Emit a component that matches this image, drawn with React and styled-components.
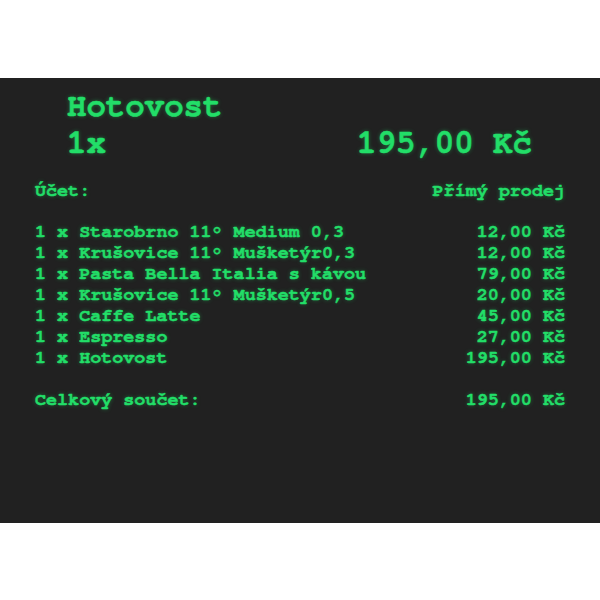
import styled, { createGlobalStyle } from "styled-components";

const mono = `"Nimbus Mono PS", "Nimbus Mono L", "FreeMono", "Courier New", "Liberation Mono", monospace`;

const GlobalStyle = createGlobalStyle`
  html, body {
    margin: 0;
    padding: 0;
    background: #ffffff;
  }
  body {
    font-family: ${mono};
  }
`;

const Page = styled.div`
  width: 600px;
  height: 600px;
  display: flex;
  align-items: center;
`;

const Display = styled.div`
  width: 100%;
  height: 445px;
  box-sizing: border-box;
  background: #212121;
  padding: 10px 35px 0;
  color: #22de68;
  font-family: ${mono};
  font-weight: bold;
  -webkit-text-stroke: 0.5px #22de68;
  text-shadow: 0 0 4px rgba(34, 222, 104, 0.45);
`;

const Header = styled.div`
  padding: 0 33px 0 32px;
  margin-bottom: 19px;
`;

const Line = styled.div`
  display: flex;
  justify-content: space-between;
  white-space: pre;
  font-size: ${({ $big }) => ($big ? "32.4px" : "18.4px")};
  line-height: ${({ $big }) => ($big ? "37px" : "20.9px")};
  margin-bottom: ${({ $gap }) => ($gap ? "20.9px" : "0")};
`;

const items = [
  ["1 x Starobrno 11° Medium 0,3", "12,00 Kč"],
  ["1 x Krušovice 11° Mušketýr0,3", "12,00 Kč"],
  ["1 x Pasta Bella Italia s kávou", "79,00 Kč"],
  ["1 x Krušovice 11° Mušketýr0,5", "20,00 Kč"],
  ["1 x Caffe Latte", "45,00 Kč"],
  ["1 x Espresso", "27,00 Kč"],
  ["1 x Hotovost", "195,00 Kč"],
];

export default function App() {
  return (
    <>
      <GlobalStyle />
      <Page>
        <Display>
          <Header>
            <Line $big>
              <span>Hotovost</span>
            </Line>
            <Line $big>
              <span>1x</span>
              <span>195,00 Kč</span>
            </Line>
          </Header>
          <Line $gap>
            <span>Účet:</span>
            <span>Přímý prodej</span>
          </Line>
          {items.map(([name, price], i) => (
            <Line key={i} $gap={i === items.length - 1}>
              <span>{name}</span>
              <span>{price}</span>
            </Line>
          ))}
          <Line>
            <span>Celkový součet:</span>
            <span>195,00 Kč</span>
          </Line>
        </Display>
      </Page>
    </>
  );
}
